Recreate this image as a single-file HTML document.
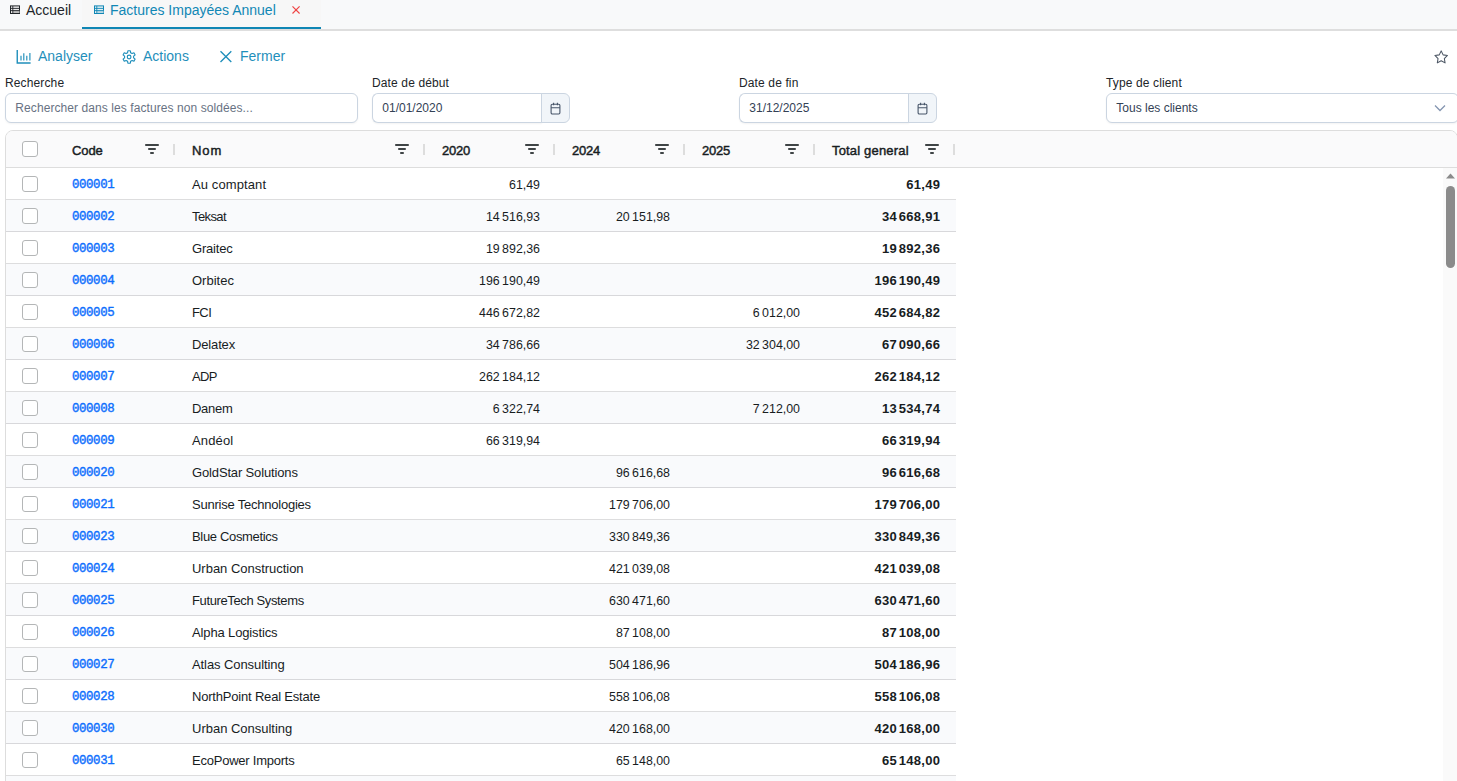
<!DOCTYPE html>
<html lang="fr">
<head>
<meta charset="utf-8">
<title>Factures Impayées Annuel</title>
<style>
*{box-sizing:border-box}
html,body{margin:0;padding:0}
body{width:1457px;height:781px;overflow:hidden;background:#fff;font-family:"Liberation Sans",Arial,sans-serif;color:#212529;position:relative}
.abs{position:absolute}
/* tab bar */
.tabbar{position:absolute;left:0;top:0;width:1457px;height:31px;background:#f8f9fa;border-bottom:2px solid #dedede}
.tab{position:absolute;top:0;height:29px;font-size:14px;line-height:16px;white-space:nowrap}
.tab .tx{position:absolute;top:2px}
.tab1{left:0;width:82px;color:#212529}
.tab2{left:82px;width:239px;background:#f7f7f7;color:#1187b5;border-bottom:2px solid #0f86b4}
.ticon{position:absolute;top:5px}
/* toolbar */
.tb{position:absolute;top:48px;font-size:14px;line-height:16px;color:#1f8fbb;white-space:nowrap}
.tb svg{position:absolute}
/* filters */
.lbl{position:absolute;top:76px;font-size:12px;line-height:14px;color:#212529;white-space:nowrap;letter-spacing:0.13px}
.inp{position:absolute;top:93px;height:30px;border:1px solid #cbd5e1;border-radius:6px;background:#fff;font-size:12px;line-height:28px;color:#334155;padding-left:9.300px;white-space:nowrap;box-shadow:0 1px 2px rgba(18,18,23,.05)}
.ph{color:#687283;letter-spacing:0.08px}
.calbtn{position:absolute;top:93px;height:30px;width:29px;border:1px solid #cbd5e1;border-left:1px solid #cbd5e1;border-radius:0 6px 6px 0;background:#f1f5f9}
/* grid */
.grid{position:absolute;left:5px;top:130px;width:1453px;height:700px;border:1px solid #dddddd;border-radius:8px 8px 0 0;overflow:hidden;background:#fff;font-size:13px;color:#181d1f}
.hdr{position:absolute;left:0;top:0;width:1453px;height:37px;background:#fafafb;border-bottom:1px solid #dddddd}
.hc{position:absolute;top:2px;height:36px;line-height:36px;font-weight:normal;-webkit-text-stroke:0.45px #181d1f;font-size:13px;letter-spacing:-0.1px;white-space:nowrap}
.hc .fi{position:absolute;top:8px}
.rz{position:absolute;top:11px;width:2px;height:11px;background:#dddddd}
.cb{position:absolute;width:16px;height:16px;border:1px solid #b4b6b7;border-radius:3px;background:#fff;left:16px}
.row{position:absolute;left:0;width:950px;height:32px;border-bottom:1px solid rgba(24,29,31,.15);background:#fff}
.row.alt{background:#f9fafc}
.c{position:absolute;top:1px;height:31px;line-height:31px;white-space:nowrap}
.code{left:66px;top:2px;font-family:"Liberation Mono",monospace;font-weight:normal;-webkit-text-stroke:0.4px #0d6efd;font-size:12.4px;letter-spacing:-0.4px;color:#0d6efd}
.nom{left:186px;letter-spacing:-0.1px}
.n{text-align:right;font-size:12.4px;letter-spacing:0;top:2px}
.n .ts{margin-left:2.400px}
.n1{left:420px;width:114px}
.n2{left:550px;width:114px}
.n3{left:680px;width:114px}
.n4{left:810px;width:124.3px;font-weight:bold;font-size:13px;letter-spacing:0.3px;top:1px}
.n4 .ts{margin-left:1.700px}
.ts{font-size:0;letter-spacing:0}
.sb{position:absolute;left:1443px;top:168px;width:14px;height:613px;background:#fafafa}
.thumb{position:absolute;left:1446px;top:186px;width:9px;height:82px;border-radius:5px;background:#8b8b8b}
</style>
</head>
<body>
<div class="tabbar">
<div class="tab tab1"><svg class="ticon" style="left:10px" width="10" height="10" viewBox="0 0 10 10"><rect x="0.5" y="0.9" width="9" height="7.6" fill="#ececec" stroke="#212529" stroke-width="1"/><rect x="3" y="5.6" width="6.5" height="2.4" fill="#bdbdbd"/><path d="M0.5 3.4h9M0.5 5.6h9M2.8 1v7.5" stroke="#212529" stroke-width="0.9" fill="none"/></svg><span class="tx" style="left:26px">Accueil</span></div>
<div class="tab tab2"><svg class="ticon" style="left:12px" width="10" height="10" viewBox="0 0 10 10"><rect x="0.5" y="0.9" width="9" height="7.6" fill="#e3f0f5" stroke="#1187b5" stroke-width="1"/><rect x="3" y="5.6" width="6.5" height="2.4" fill="#b9d9e6"/><path d="M0.5 3.4h9M0.5 5.6h9M2.8 1v7.5" stroke="#1187b5" stroke-width="0.9" fill="none"/></svg><span class="tx" style="left:28px">Factures Impayées Annuel</span><svg class="abs" style="left:209px;top:5px" width="10" height="10" viewBox="0 0 10 10"><path d="M1.500 1.400L8.600 8.500M8.600 1.400L1.500 8.500" stroke="#ef4444" stroke-width="1.150" fill="none"/></svg></div>
</div>
<div class="tb" style="left:16px"><svg style="left:0;top:1px" width="16" height="16" viewBox="0 0 16 16"><path d="M1.250 1V14H14.600" stroke="#1f8fbb" stroke-width="1.400" fill="none"/><path d="M5 6.700v4.800M7.800 4.300v7.200M10.800 6.700v4.800M13.900 4v7.500" stroke="#1f8fbb" stroke-width="1.150" fill="none"/></svg><span style="position:absolute;left:22px;top:0">Analyser</span></div>
<div class="tb" style="left:122px"><svg style="left:0;top:2px" width="15" height="15" viewBox="0 0 15 15" fill="none" stroke="#1f8fbb" stroke-width="1.150" stroke-linejoin="round"><circle cx="7.100" cy="7" r="1.850"/><path d="M8.60 2.65L8.32 0.72L5.88 0.72L5.60 2.65L4.08 3.53L2.27 2.80L1.05 4.92L2.58 6.12L2.58 7.88L1.05 9.08L2.27 11.20L4.08 10.47L5.60 11.35L5.88 13.28L8.32 13.28L8.60 11.35L10.12 10.47L11.93 11.20L13.15 9.08L11.62 7.88L11.62 6.12L13.15 4.92L11.93 2.80L10.12 3.53Z"/></svg><span style="position:absolute;left:21px;top:0">Actions</span></div>
<div class="tb" style="left:219px"><svg style="left:0;top:2px" width="14" height="14" viewBox="0 0 14 14"><path d="M1.500 1.300l10.800 10.800M12.300 1.300l-10.800 10.800" stroke="#1f8fbb" stroke-width="1.350" fill="none"/></svg><span style="position:absolute;left:21px;top:0">Fermer</span></div>
<svg class="abs" style="left:1433.400px;top:49px" width="16.400" height="16" viewBox="0 0 24 24" fill="none" stroke="#4b5563" stroke-width="1.600" stroke-linejoin="round"><path d="M12 2.800l2.900 6 6.500.9-4.700 4.600 1.100 6.500L12 17.700l-5.800 3.100 1.100-6.500L2.600 9.700l6.500-.9z"/></svg>
<div class="lbl" style="left:5px">Recherche</div>
<div class="inp" style="left:5px;width:353px"><span class="ph">Rechercher dans les factures non soldées...</span></div>
<div class="lbl" style="left:372px">Date de début</div>
<div class="inp" style="left:372px;width:170px;border-radius:6px 0 0 6px;border-right:0">01/01/2020</div>
<div class="calbtn" style="left:541px"><svg class="abs" style="left:8px;top:7.500px" width="12" height="14" viewBox="0 0 12 14" fill="none" stroke="#475569" stroke-width="1.100"><rect x="1.100" y="2.200" width="8.800" height="9.800" rx="1.200"/><path d="M1.100 5.800h8.800M3.600 0.800v2.400M7.400 0.800v2.400"/></svg></div>
<div class="lbl" style="left:739px">Date de fin</div>
<div class="inp" style="left:739px;width:170px;border-radius:6px 0 0 6px;border-right:0">31/12/2025</div>
<div class="calbtn" style="left:908px"><svg class="abs" style="left:8px;top:7.500px" width="12" height="14" viewBox="0 0 12 14" fill="none" stroke="#475569" stroke-width="1.100"><rect x="1.100" y="2.200" width="8.800" height="9.800" rx="1.200"/><path d="M1.100 5.800h8.800M3.600 0.800v2.400M7.400 0.800v2.400"/></svg></div>
<div class="lbl" style="left:1106px">Type de client</div>
<div class="inp" style="left:1106px;width:353px">Tous les clients<svg class="abs" style="left:326px;top:7.100px" width="14" height="14" viewBox="0 0 14 14"><path d="M2 4.500l5 5 5-5" stroke="#8495b0" stroke-width="1.250" fill="none"/></svg></div>
<div class="grid">
<div class="hdr">
<div class="cb" style="top:10px"></div>
<div class="hc" style="left:50px;width:120px"><span style="position:absolute;left:16px;letter-spacing:-0.090px">Code</span><span style="position:absolute;left:88px;top:0"><svg class="fi" style="left:0" width="16" height="16" viewBox="0 0 16 16"><path d="M1.900 4H14.100M4.900 8h6.200M6.900 12h2.200" stroke="#3f4446" stroke-width="1.800" stroke-linecap="round" fill="none"/></svg></span><div class="rz" style="left:117px"></div></div>
<div class="hc" style="left:170px;width:250px"><span style="position:absolute;left:16px;letter-spacing:0.900px">Nom</span><span style="position:absolute;left:218px;top:0"><svg class="fi" style="left:0" width="16" height="16" viewBox="0 0 16 16"><path d="M1.900 4H14.100M4.900 8h6.200M6.900 12h2.200" stroke="#3f4446" stroke-width="1.800" stroke-linecap="round" fill="none"/></svg></span><div class="rz" style="left:247px"></div></div>
<div class="hc" style="left:420px;width:130px"><span style="position:absolute;left:16px;letter-spacing:-0.270px">2020</span><span style="position:absolute;left:98px;top:0"><svg class="fi" style="left:0" width="16" height="16" viewBox="0 0 16 16"><path d="M1.900 4H14.100M4.900 8h6.200M6.900 12h2.200" stroke="#3f4446" stroke-width="1.800" stroke-linecap="round" fill="none"/></svg></span><div class="rz" style="left:127px"></div></div>
<div class="hc" style="left:550px;width:130px"><span style="position:absolute;left:16px;letter-spacing:-0.270px">2024</span><span style="position:absolute;left:98px;top:0"><svg class="fi" style="left:0" width="16" height="16" viewBox="0 0 16 16"><path d="M1.900 4H14.100M4.900 8h6.200M6.900 12h2.200" stroke="#3f4446" stroke-width="1.800" stroke-linecap="round" fill="none"/></svg></span><div class="rz" style="left:127px"></div></div>
<div class="hc" style="left:680px;width:130px"><span style="position:absolute;left:16px;letter-spacing:-0.270px">2025</span><span style="position:absolute;left:98px;top:0"><svg class="fi" style="left:0" width="16" height="16" viewBox="0 0 16 16"><path d="M1.900 4H14.100M4.900 8h6.200M6.900 12h2.200" stroke="#3f4446" stroke-width="1.800" stroke-linecap="round" fill="none"/></svg></span><div class="rz" style="left:127px"></div></div>
<div class="hc" style="left:810px;width:140px"><span style="position:absolute;left:16px;letter-spacing:0.174px">Total general</span><span style="position:absolute;left:108px;top:0"><svg class="fi" style="left:0" width="16" height="16" viewBox="0 0 16 16"><path d="M1.900 4H14.100M4.900 8h6.200M6.900 12h2.200" stroke="#3f4446" stroke-width="1.800" stroke-linecap="round" fill="none"/></svg></span><div class="rz" style="left:137px"></div></div>
</div>
<div class="row" style="top:37px"><div class="cb" style="top:8px"></div><div class="c code">000001</div><div class="c nom" style="letter-spacing:0.107px">Au comptant</div><div class="c n n1">61,49</div><div class="c n n2"></div><div class="c n n3"></div><div class="c n n4">61,49</div></div>
<div class="row alt" style="top:69px"><div class="cb" style="top:8px"></div><div class="c code">000002</div><div class="c nom" style="letter-spacing:-0.600px">Teksat</div><div class="c n n1">14<span class="ts">&nbsp;</span>516,93</div><div class="c n n2">20<span class="ts">&nbsp;</span>151,98</div><div class="c n n3"></div><div class="c n n4">34<span class="ts">&nbsp;</span>668,91</div></div>
<div class="row" style="top:101px"><div class="cb" style="top:8px"></div><div class="c code">000003</div><div class="c nom" style="letter-spacing:-0.205px">Graitec</div><div class="c n n1">19<span class="ts">&nbsp;</span>892,36</div><div class="c n n2"></div><div class="c n n3"></div><div class="c n n4">19<span class="ts">&nbsp;</span>892,36</div></div>
<div class="row alt" style="top:133px"><div class="cb" style="top:8px"></div><div class="c code">000004</div><div class="c nom" style="letter-spacing:0.005px">Orbitec</div><div class="c n n1">196<span class="ts">&nbsp;</span>190,49</div><div class="c n n2"></div><div class="c n n3"></div><div class="c n n4">196<span class="ts">&nbsp;</span>190,49</div></div>
<div class="row" style="top:165px"><div class="cb" style="top:8px"></div><div class="c code">000005</div><div class="c nom" style="letter-spacing:-0.600px">FCI</div><div class="c n n1">446<span class="ts">&nbsp;</span>672,82</div><div class="c n n2"></div><div class="c n n3">6<span class="ts">&nbsp;</span>012,00</div><div class="c n n4">452<span class="ts">&nbsp;</span>684,82</div></div>
<div class="row alt" style="top:197px"><div class="cb" style="top:8px"></div><div class="c code">000006</div><div class="c nom" style="letter-spacing:-0.145px">Delatex</div><div class="c n n1">34<span class="ts">&nbsp;</span>786,66</div><div class="c n n2"></div><div class="c n n3">32<span class="ts">&nbsp;</span>304,00</div><div class="c n n4">67<span class="ts">&nbsp;</span>090,66</div></div>
<div class="row" style="top:229px"><div class="cb" style="top:8px"></div><div class="c code">000007</div><div class="c nom" style="letter-spacing:-0.600px">ADP</div><div class="c n n1">262<span class="ts">&nbsp;</span>184,12</div><div class="c n n2"></div><div class="c n n3"></div><div class="c n n4">262<span class="ts">&nbsp;</span>184,12</div></div>
<div class="row alt" style="top:261px"><div class="cb" style="top:8px"></div><div class="c code">000008</div><div class="c nom" style="letter-spacing:-0.298px">Danem</div><div class="c n n1">6<span class="ts">&nbsp;</span>322,74</div><div class="c n n2"></div><div class="c n n3">7<span class="ts">&nbsp;</span>212,00</div><div class="c n n4">13<span class="ts">&nbsp;</span>534,74</div></div>
<div class="row" style="top:293px"><div class="cb" style="top:8px"></div><div class="c code">000009</div><div class="c nom" style="letter-spacing:0.134px">Andéol</div><div class="c n n1">66<span class="ts">&nbsp;</span>319,94</div><div class="c n n2"></div><div class="c n n3"></div><div class="c n n4">66<span class="ts">&nbsp;</span>319,94</div></div>
<div class="row alt" style="top:325px"><div class="cb" style="top:8px"></div><div class="c code">000020</div><div class="c nom" style="letter-spacing:-0.146px">GoldStar Solutions</div><div class="c n n1"></div><div class="c n n2">96<span class="ts">&nbsp;</span>616,68</div><div class="c n n3"></div><div class="c n n4">96<span class="ts">&nbsp;</span>616,68</div></div>
<div class="row" style="top:357px"><div class="cb" style="top:8px"></div><div class="c code">000021</div><div class="c nom" style="letter-spacing:-0.225px">Sunrise Technologies</div><div class="c n n1"></div><div class="c n n2">179<span class="ts">&nbsp;</span>706,00</div><div class="c n n3"></div><div class="c n n4">179<span class="ts">&nbsp;</span>706,00</div></div>
<div class="row alt" style="top:389px"><div class="cb" style="top:8px"></div><div class="c code">000023</div><div class="c nom" style="letter-spacing:-0.336px">Blue Cosmetics</div><div class="c n n1"></div><div class="c n n2">330<span class="ts">&nbsp;</span>849,36</div><div class="c n n3"></div><div class="c n n4">330<span class="ts">&nbsp;</span>849,36</div></div>
<div class="row" style="top:421px"><div class="cb" style="top:8px"></div><div class="c code">000024</div><div class="c nom" style="letter-spacing:-0.024px">Urban Construction</div><div class="c n n1"></div><div class="c n n2">421<span class="ts">&nbsp;</span>039,08</div><div class="c n n3"></div><div class="c n n4">421<span class="ts">&nbsp;</span>039,08</div></div>
<div class="row alt" style="top:453px"><div class="cb" style="top:8px"></div><div class="c code">000025</div><div class="c nom" style="letter-spacing:-0.372px">FutureTech Systems</div><div class="c n n1"></div><div class="c n n2">630<span class="ts">&nbsp;</span>471,60</div><div class="c n n3"></div><div class="c n n4">630<span class="ts">&nbsp;</span>471,60</div></div>
<div class="row" style="top:485px"><div class="cb" style="top:8px"></div><div class="c code">000026</div><div class="c nom" style="letter-spacing:-0.132px">Alpha Logistics</div><div class="c n n1"></div><div class="c n n2">87<span class="ts">&nbsp;</span>108,00</div><div class="c n n3"></div><div class="c n n4">87<span class="ts">&nbsp;</span>108,00</div></div>
<div class="row alt" style="top:517px"><div class="cb" style="top:8px"></div><div class="c code">000027</div><div class="c nom" style="letter-spacing:-0.082px">Atlas Consulting</div><div class="c n n1"></div><div class="c n n2">504<span class="ts">&nbsp;</span>186,96</div><div class="c n n3"></div><div class="c n n4">504<span class="ts">&nbsp;</span>186,96</div></div>
<div class="row" style="top:549px"><div class="cb" style="top:8px"></div><div class="c code">000028</div><div class="c nom" style="letter-spacing:-0.192px">NorthPoint Real Estate</div><div class="c n n1"></div><div class="c n n2">558<span class="ts">&nbsp;</span>106,08</div><div class="c n n3"></div><div class="c n n4">558<span class="ts">&nbsp;</span>106,08</div></div>
<div class="row alt" style="top:581px"><div class="cb" style="top:8px"></div><div class="c code">000030</div><div class="c nom" style="letter-spacing:-0.010px">Urban Consulting</div><div class="c n n1"></div><div class="c n n2">420<span class="ts">&nbsp;</span>168,00</div><div class="c n n3"></div><div class="c n n4">420<span class="ts">&nbsp;</span>168,00</div></div>
<div class="row" style="top:613px"><div class="cb" style="top:8px"></div><div class="c code">000031</div><div class="c nom" style="letter-spacing:-0.232px">EcoPower Imports</div><div class="c n n1"></div><div class="c n n2">65<span class="ts">&nbsp;</span>148,00</div><div class="c n n3"></div><div class="c n n4">65<span class="ts">&nbsp;</span>148,00</div></div>
<div class="row alt" style="top:645px"><div class="cb" style="top:8px"></div><div class="c code"></div><div class="c nom" style="letter-spacing:-0.100px"></div><div class="c n n1"></div><div class="c n n2"></div><div class="c n n3"></div><div class="c n n4"></div></div>
</div>
<div class="sb"></div><svg class="abs" style="left:1446px;top:173px" width="9" height="6" viewBox="0 0 9 6"><path d="M0 5.500L4.500 0.500 9 5.500z" fill="#8b8b8b"/></svg><div class="thumb"></div>
</body>
</html>
